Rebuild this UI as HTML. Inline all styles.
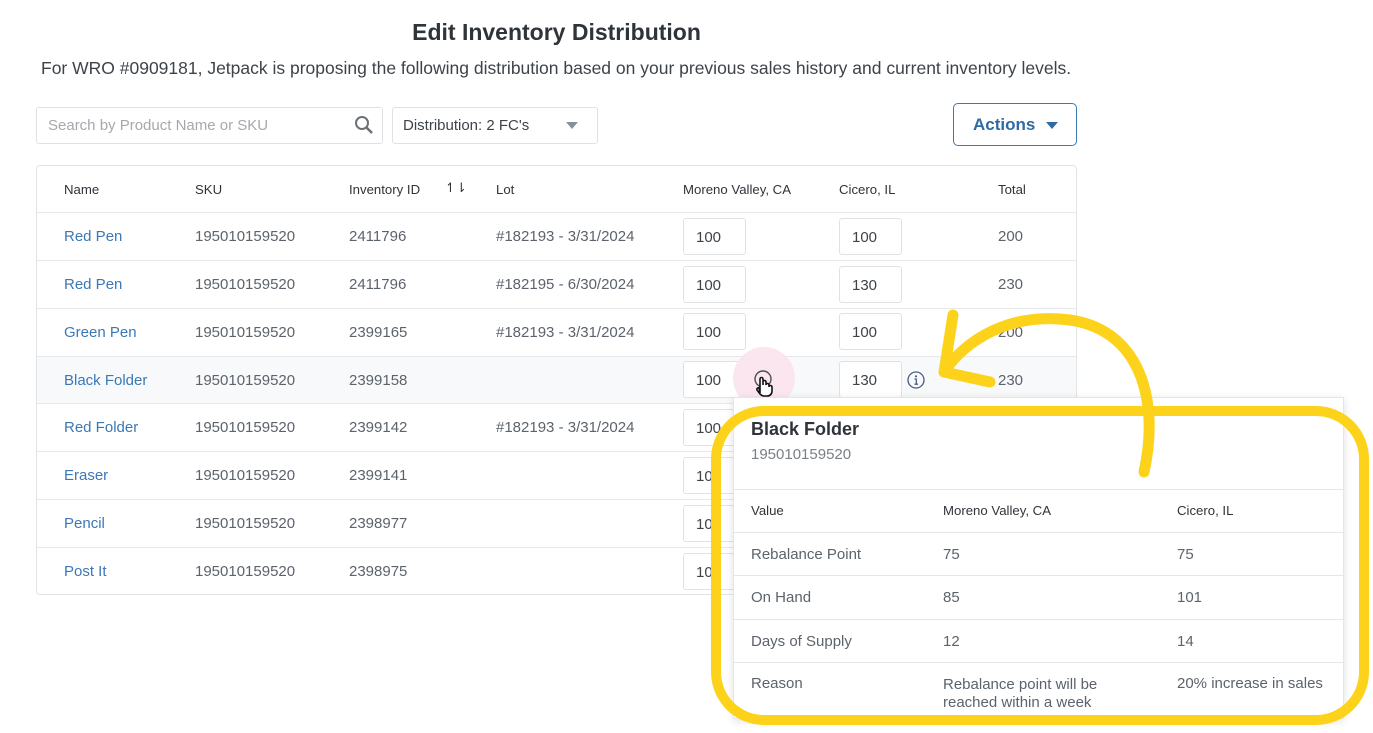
<!DOCTYPE html>
<html><head><meta charset="utf-8"><style>
*{margin:0;padding:0;box-sizing:border-box}
body{width:1373px;height:733px;background:#fff;font-family:"Liberation Sans",sans-serif;position:relative;overflow:hidden;color:#5c636b}
.a{position:absolute;white-space:nowrap}
.t{font-size:15px;line-height:16px}
.h{font-size:13.2px;color:#2f343a}
.lk{color:#3b78b6}
.in{position:absolute;width:63px;height:37px;border:1px solid #dfe2e5;border-radius:3px;font-size:15px;padding:10px 0 0 12px;color:#3d434a;background:#fff}
.ln{position:absolute;left:37px;width:1039px;height:1px;background:#e6e8ea}
.pl{position:absolute;left:733px;width:610px;height:1px;background:#e4e6e8}
</style></head><body>
<div class="a" style="left:0;width:1113px;text-align:center;top:19px;font-size:23px;font-weight:bold;color:#2f343a">Edit Inventory Distribution</div>
<div class="a" style="left:41px;top:58px;font-size:17.5px;color:#3d434a">For WRO #0909181, Jetpack is proposing the following distribution based on your previous sales history and current inventory levels.</div>

<div class="a" style="left:36px;top:107px;width:347px;height:37px;border:1px solid #dfe2e5;border-radius:3px"></div>
<div class="a t" style="left:48px;top:118px;color:#a4a9ae">Search by Product Name or SKU</div>
<svg class="a" style="left:354px;top:115px" width="20" height="20" viewBox="0 0 20 20"><circle cx="8" cy="8" r="6" fill="none" stroke="#6b7178" stroke-width="2"/><path d="M12.5 12.5L18 18" stroke="#6b7178" stroke-width="2.5"/></svg>
<div class="a" style="left:392px;top:107px;width:206px;height:37px;border:1px solid #dfe2e5;border-radius:3px"></div>
<div class="a t" style="left:403px;top:118px;color:#3d434a">Distribution: 2 FC's</div>
<div class="a" style="left:566px;top:122px;border-left:6px solid transparent;border-right:6px solid transparent;border-top:7px solid #8a9097"></div>
<div class="a" style="left:953px;top:103px;width:124px;height:43px;border:1px solid #3b78b6;border-radius:5px"></div>
<div class="a" style="left:973px;top:115px;font-size:17px;font-weight:bold;color:#2f6aa5">Actions</div>
<div class="a" style="left:1046px;top:122px;border-left:6px solid transparent;border-right:6px solid transparent;border-top:7px solid #2f6aa5"></div>

<div class="a" style="left:36px;top:165px;width:1041px;height:430px;border:1px solid #e1e4e6;border-radius:4px"></div>
<div class="a" style="left:37px;top:357px;width:1039px;height:46px;background:#f8f9fa"></div>
<div class="a h" style="left:64px;top:182px">Name</div>
<div class="a h" style="left:195px;top:182px">SKU</div>
<div class="a h" style="left:349px;top:182px">Inventory ID</div>
<div class="a h" style="left:445px;top:180px;font-size:13px">↿⇂</div>
<div class="a h" style="left:496px;top:182px">Lot</div>
<div class="a h" style="left:683px;top:182px">Moreno Valley, CA</div>
<div class="a h" style="left:839px;top:182px">Cicero, IL</div>
<div class="a h" style="left:998px;top:182px">Total</div>
<div class="ln" style="top:212px"></div><div class="ln" style="top:260px"></div><div class="ln" style="top:308px"></div><div class="ln" style="top:356px"></div><div class="ln" style="top:403px"></div><div class="ln" style="top:451px"></div><div class="ln" style="top:499px"></div><div class="ln" style="top:547px"></div>

<div class="a t lk" style="left:64px;top:229px">Red Pen</div><div class="a t" style="left:195px;top:229px">195010159520</div><div class="a t" style="left:349px;top:229px">2411796</div><div class="a t" style="left:496px;top:229px">#182193 - 3/31/2024</div><div class="in" style="left:683px;top:218px">100</div><div class="in" style="left:839px;top:218px">100</div><div class="a t" style="left:998px;top:229px">200</div>
<div class="a t lk" style="left:64px;top:277px">Red Pen</div><div class="a t" style="left:195px;top:277px">195010159520</div><div class="a t" style="left:349px;top:277px">2411796</div><div class="a t" style="left:496px;top:277px">#182195 - 6/30/2024</div><div class="in" style="left:683px;top:266px">100</div><div class="in" style="left:839px;top:266px">130</div><div class="a t" style="left:998px;top:277px">230</div>
<div class="a t lk" style="left:64px;top:325px">Green Pen</div><div class="a t" style="left:195px;top:325px">195010159520</div><div class="a t" style="left:349px;top:325px">2399165</div><div class="a t" style="left:496px;top:325px">#182193 - 3/31/2024</div><div class="in" style="left:683px;top:313px">100</div><div class="in" style="left:839px;top:313px">100</div><div class="a t" style="left:998px;top:325px">200</div>
<div class="a t lk" style="left:64px;top:373px">Black Folder</div><div class="a t" style="left:195px;top:373px">195010159520</div><div class="a t" style="left:349px;top:373px">2399158</div><div class="in" style="left:683px;top:361px">100</div><div class="in" style="left:839px;top:361px">130</div><div class="a t" style="left:998px;top:373px">230</div>
<div class="a" style="left:733px;top:347px;width:62px;height:62px;border-radius:50%;background:#fbe6f0"></div>
<svg class="a" style="left:752px;top:369px" width="24" height="28" viewBox="0 0 24 28"><circle cx="11" cy="10" r="8" fill="none" stroke="#4a5058" stroke-width="1.4"/><path d="M8 24V10a1.5 1.5 0 013 0v6l0-3a1.5 1.5 0 013 0v3a1.5 1.5 0 013 0v2a1.5 1.5 0 013 0v4c0 3-2 5-5 5h-3c-2 0-3-1-4-2l-3-4a1.5 1.5 0 012-2z" fill="#fff" stroke="#111" stroke-width="1.6"/></svg>
<svg class="a" style="left:906px;top:370px" width="20" height="20" viewBox="0 0 20 20"><circle cx="10" cy="10" r="8" fill="none" stroke="#4a5f86" stroke-width="1.3"/><circle cx="10" cy="6.3" r="1.1" fill="#4a5f86"/><path d="M8.5 9h1.8v5M8.5 14.2h3.5" stroke="#4a5f86" stroke-width="1.3" fill="none"/></svg>
<div class="a t lk" style="left:64px;top:420px">Red Folder</div><div class="a t" style="left:195px;top:420px">195010159520</div><div class="a t" style="left:349px;top:420px">2399142</div><div class="a t" style="left:496px;top:420px">#182193 - 3/31/2024</div><div class="in" style="left:683px;top:409px">100</div>
<div class="a t lk" style="left:64px;top:468px">Eraser</div><div class="a t" style="left:195px;top:468px">195010159520</div><div class="a t" style="left:349px;top:468px">2399141</div><div class="in" style="left:683px;top:457px">100</div>
<div class="a t lk" style="left:64px;top:516px">Pencil</div><div class="a t" style="left:195px;top:516px">195010159520</div><div class="a t" style="left:349px;top:516px">2398977</div><div class="in" style="left:683px;top:505px">100</div>
<div class="a t lk" style="left:64px;top:564px">Post It</div><div class="a t" style="left:195px;top:564px">195010159520</div><div class="a t" style="left:349px;top:564px">2398975</div><div class="in" style="left:683px;top:553px">100</div>

<div class="a" style="left:733px;top:397px;width:611px;height:322px;background:#fff;border:1px solid #e4e6e8;box-shadow:0 2px 8px rgba(0,0,0,.12)"></div>
<div class="a" style="left:751px;top:419px;font-size:18px;font-weight:bold;color:#2f343a">Black Folder</div>
<div class="a t" style="left:751px;top:447px;color:#7a8087">195010159520</div>
<div class="pl" style="top:489px"></div><div class="pl" style="top:532px"></div><div class="pl" style="top:575px"></div><div class="pl" style="top:619px"></div><div class="pl" style="top:662px"></div>
<div class="a h" style="left:751px;top:503px">Value</div><div class="a h" style="left:943px;top:503px">Moreno Valley, CA</div><div class="a h" style="left:1177px;top:503px">Cicero, IL</div>
<div class="a t" style="left:751px;top:547px">Rebalance Point</div><div class="a t" style="left:943px;top:547px">75</div><div class="a t" style="left:1177px;top:547px">75</div>
<div class="a t" style="left:751px;top:590px">On Hand</div><div class="a t" style="left:943px;top:590px">85</div><div class="a t" style="left:1177px;top:590px">101</div>
<div class="a t" style="left:751px;top:634px">Days of Supply</div><div class="a t" style="left:943px;top:634px">12</div><div class="a t" style="left:1177px;top:634px">14</div>
<div class="a t" style="left:751px;top:676px">Reason</div><div class="a t" style="left:943px;top:676px;line-height:18px">Rebalance point will be<br>reached within a week</div><div class="a t" style="left:1177px;top:676px">20% increase in sales</div>

<svg class="a" style="left:0;top:0" width="1373" height="733" viewBox="0 0 1373 733">
<rect x="716" y="411" width="648" height="309" rx="48" fill="none" stroke="#fdd21a" stroke-width="10"/>
<path d="M1144 472C1160 400 1140 330 1070 320C1010 312 965 340 944 372M944 372L953 315M944 372L990 382" fill="none" stroke="#fdd21a" stroke-width="11" stroke-linecap="round" stroke-linejoin="round"/>
</svg>
</body></html>
